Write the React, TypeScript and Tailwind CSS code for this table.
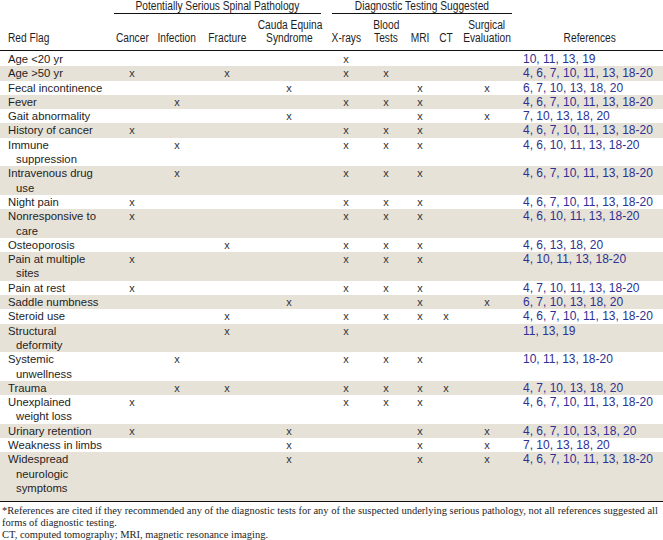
import React from 'react';

// Tabla de banderas rojas: patología espinal seria y pruebas diagnósticas

const COLS = 'grid grid-cols-[112px_40px_50px_50px_74px_40px_40px_28px_24px_58px_1fr]';

interface Row {
  flag: string[];
  marks: number[]; // indices 0..8 -> Cancer..Surgical
  refs: string;
}

// 0 Cancer, 1 Infection, 2 Fracture, 3 Cauda, 4 X-rays, 5 Blood, 6 MRI, 7 CT, 8 Surgical
const rows: Row[] = [
  { flag: ['Age <20 yr'], marks: [4], refs: '10, 11, 13, 19' },
  { flag: ['Age >50 yr'], marks: [0, 2, 4, 5], refs: '4, 6, 7, 10, 11, 13, 18-20' },
  { flag: ['Fecal incontinence'], marks: [3, 6, 8], refs: '6, 7, 10, 13, 18, 20' },
  { flag: ['Fever'], marks: [1, 4, 5, 6], refs: '4, 6, 7, 10, 11, 13, 18-20' },
  { flag: ['Gait abnormality'], marks: [3, 6, 8], refs: '7, 10, 13, 18, 20' },
  { flag: ['History of cancer'], marks: [0, 4, 5, 6], refs: '4, 6, 7, 10, 11, 13, 18-20' },
  { flag: ['Immune', 'suppression'], marks: [1, 4, 5, 6], refs: '4, 6, 10, 11, 13, 18-20' },
  { flag: ['Intravenous drug', 'use'], marks: [1, 4, 5, 6], refs: '4, 6, 7, 10, 11, 13, 18-20' },
  { flag: ['Night pain'], marks: [0, 4, 5, 6], refs: '4, 6, 7, 10, 11, 13, 18-20' },
  { flag: ['Nonresponsive to', 'care'], marks: [0, 4, 5, 6], refs: '4, 6, 10, 11, 13, 18-20' },
  { flag: ['Osteoporosis'], marks: [2, 4, 5, 6], refs: '4, 6, 13, 18, 20' },
  { flag: ['Pain at multiple', 'sites'], marks: [0, 4, 5, 6], refs: '4, 10, 11, 13, 18-20' },
  { flag: ['Pain at rest'], marks: [0, 4, 5, 6], refs: '4, 7, 10, 11, 13, 18-20' },
  { flag: ['Saddle numbness'], marks: [3, 6, 8], refs: '6, 7, 10, 13, 18, 20' },
  { flag: ['Steroid use'], marks: [2, 4, 5, 6, 7], refs: '4, 6, 7, 10, 11, 13, 18-20' },
  { flag: ['Structural', 'deformity'], marks: [2, 4], refs: '11, 13, 19' },
  { flag: ['Systemic', 'unwellness'], marks: [1, 4, 5, 6], refs: '10, 11, 13, 18-20' },
  { flag: ['Trauma'], marks: [1, 2, 4, 5, 6, 7], refs: '4, 7, 10, 13, 18, 20' },
  { flag: ['Unexplained', 'weight loss'], marks: [0, 4, 5, 6], refs: '4, 6, 7, 10, 11, 13, 18-20' },
  { flag: ['Urinary retention'], marks: [0, 3, 6, 8], refs: '4, 6, 7, 10, 13, 18, 20' },
  { flag: ['Weakness in limbs'], marks: [3, 6, 8], refs: '7, 10, 13, 18, 20' },
  { flag: ['Widespread', 'neurologic', 'symptoms'], marks: [3, 6, 8], refs: '4, 6, 7, 10, 11, 13, 18-20' },
];

const headers: string[][] = [
  ['Cancer'],
  ['Infection'],
  ['Fracture'],
  ['Cauda Equina', 'Syndrome'],
  ['X-rays'],
  ['Blood', 'Tests'],
  ['MRI'],
  ['CT'],
  ['Surgical', 'Evaluation'],
];

// texto "condensado" para los encabezados
const Narrow: React.FC<{ children: React.ReactNode; left?: boolean }> = ({ children, left }) => (
  <span className={`inline-block whitespace-nowrap scale-x-[0.85] ${left ? 'origin-left' : 'origin-center'}`}>
    {children}
  </span>
);

const TableRow: React.FC<{ row: Row; stripe: boolean; last: boolean }> = ({ row, stripe, last }) => (
  <div className={`${COLS} ${stripe ? 'bg-[#e7e2d8]' : 'bg-white'} ${last ? 'pb-[6px]' : ''}`}>
    <div className="pl-2 text-[11.3px] leading-[14.3px] text-[#1e1e1e]">
      {row.flag.map((line, i) => (
        <div key={i} className={i === 0 ? '' : 'pl-2'}>
          {line}
        </div>
      ))}
    </div>
    {headers.map((_, i) => (
      <div key={i} className="text-center text-[11px] leading-[14.3px] text-[#333]">
        {row.marks.includes(i) ? 'x' : ''}
      </div>
    ))}
    <div className="pl-[7px] text-[12px] leading-[14.3px] text-[#2e3192]">{row.refs}</div>
  </div>
);

const App: React.FC = () => {
  return (
    <div className="w-[663px] h-[540px] bg-white overflow-hidden font-['Liberation_Sans',Arial,sans-serif]">
      {/* Encabezado */}
      <div className="border-b border-[#111] text-[12px] text-[#1e1e1e]">
        <div className={COLS}>
          <div />
          <div className="col-span-4 ml-[2px] mr-[5px] border-b border-[#111] text-center leading-[13px]">
            <Narrow>Potentially Serious Spinal Pathology</Narrow>
          </div>
          <div className="col-span-5 ml-[6px] mr-[4px] border-b border-[#111] text-center leading-[13px]">
            <Narrow>Diagnostic Testing Suggested</Narrow>
          </div>
          <div />
        </div>
        <div className={`${COLS} items-end pt-[5px] pb-[5px]`}>
          <div className="pl-2 leading-[13px]">
            <Narrow left>Red Flag</Narrow>
          </div>
          {headers.map((h, i) => (
            <div key={i} className="text-center leading-[13px]">
              {h.map((l, j) => (
                <div key={j}>
                  <Narrow>{l}</Narrow>
                </div>
              ))}
            </div>
          ))}
          <div className="text-center leading-[13px]">
            <Narrow>References</Narrow>
          </div>
        </div>
      </div>

      {/* Filas */}
      <div className="border-b border-[#111] pt-px">
        {rows.map((r, i) => (
          <TableRow key={i} row={r} stripe={i % 2 === 1} last={i === rows.length - 1} />
        ))}
      </div>

      {/* Notas al pie */}
      <div className="pl-[2px] pt-[3px] font-['Liberation_Serif','Times_New_Roman',serif] text-[10.5px] leading-[11.7px] text-[#1e1e1e]">
        <p>
          *References are cited if they recommended any of the diagnostic tests for any of the suspected underlying
          serious pathology, not all references suggested all forms of diagnostic testing.
        </p>
        <p>CT, computed tomography; MRI, magnetic resonance imaging.</p>
      </div>
    </div>
  );
};

export default App;
